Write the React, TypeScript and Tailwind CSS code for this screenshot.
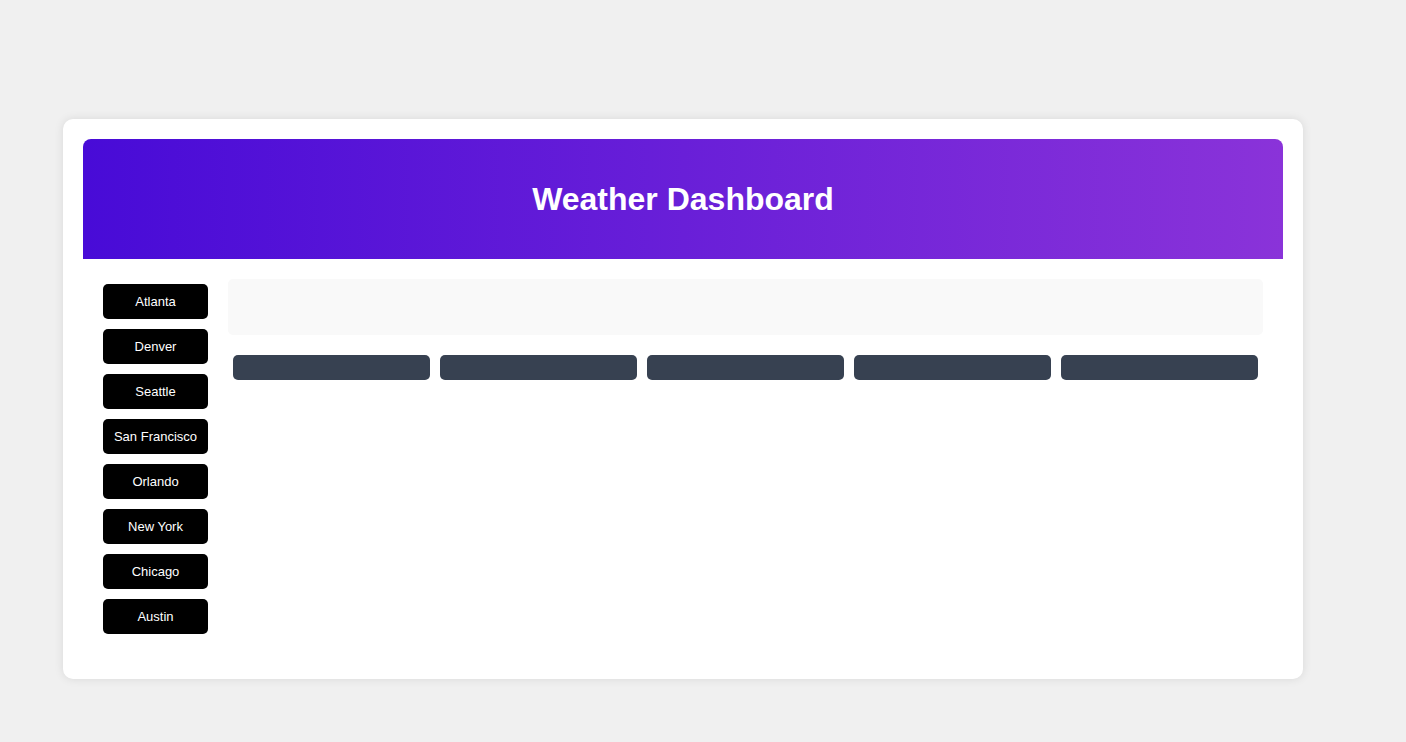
import React from "react";

const cities = ["Atlanta", "Denver", "Seattle", "San Francisco", "Orlando", "New York", "Chicago", "Austin"];

export default function App() {
  return (
    <div className="min-h-[742px] w-full bg-[#f0f0f0] pt-[119px] pl-[63px]" style={{ fontFamily: '"Liberation Sans", Arial, sans-serif' }}>
      <div className="w-[1240px] h-[560px] bg-white rounded-[10px] shadow-[0_0_10px_rgba(0,0,0,0.1)] p-[20px]">
        <div className="h-[120px] rounded-t-[8px] bg-[linear-gradient(to_right,#480bd7,#8a33d9)] flex items-center justify-center">
          <h1 className="text-white text-[32px] font-bold leading-none">Weather Dashboard</h1>
        </div>
        <div className="flex p-[20px] gap-[20px]">
          <div className="w-[105px] flex flex-col gap-[10px] pt-[5px]">
            {cities.map((c) => (
              <button key={c} className="h-[35px] w-[105px] bg-black text-white text-[13px] rounded-[5px] flex items-center justify-center">
                {c}
              </button>
            ))}
          </div>
          <div className="flex-1 flex flex-col">
            <div className="h-[56px] bg-[#f9f9f9] rounded-[5px]"></div>
            <div className="flex gap-[10px] px-[5px] mt-[20px]">
              {[0, 1, 2, 3, 4].map((i) => (
                <div key={i} className="w-[197px] h-[25px] bg-[#374151] rounded-[5px]"></div>
              ))}
            </div>
          </div>
        </div>
      </div>
    </div>
  );
}
